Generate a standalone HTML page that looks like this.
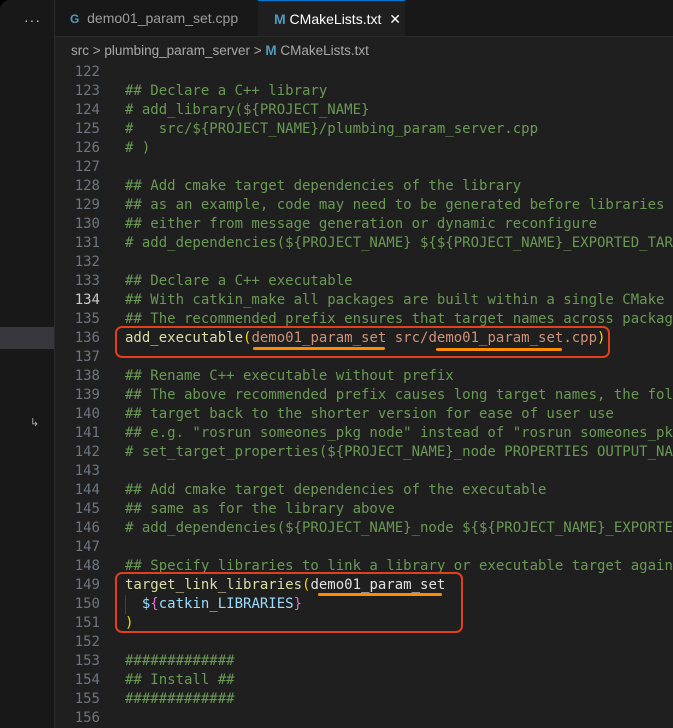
<!DOCTYPE html><html><head><style>
body{margin:0;width:673px;height:728px;background:#000;overflow:hidden;font-family:"Liberation Sans",sans-serif}
.win{position:absolute;left:0;top:0;width:673px;height:728px;background:#1f1f1f;border-top-left-radius:10px;overflow:hidden}
.side{position:absolute;left:0;top:0;width:54px;height:728px;background:#181818;border-right:1px solid #2b2b2b}
.hl{position:absolute;left:0;top:327px;width:54px;height:22px;background:#37373d}
.tabs{position:absolute;left:55px;top:0;right:0;height:36px;background:#181818;border-bottom:1px solid #2b2b2b}
.tab{position:absolute;top:0;height:36px;line-height:36px;font-size:14px;color:#9d9d9d}
.bc{position:absolute;left:55px;top:37px;right:0;height:25px;line-height:27px;font-size:13.5px;color:#a9a9a9}
.code{position:absolute;left:55px;top:63px;font-family:"DejaVu Sans Mono",monospace;font-size:14px;line-height:19px;white-space:pre}
.ln{position:absolute;left:0;width:45px;text-align:right;color:#6e7681}
.tx{position:absolute;left:70px;color:#cccccc}
.c{color:#6a9955}.f{color:#dcdcaa}.p{color:#ffd700}.s{color:#ce9178}.v{color:#9cdcfe}.m{color:#da70d6}
.box{position:absolute;border:2px solid #e0401b;border-radius:7px}
.ul{position:absolute;height:3px;background:#ff8c00;border-radius:2px}
</style></head><body><div class="win">
<div class="side"><div style="position:absolute;left:24px;top:12px;color:#ccc;font-size:14px;letter-spacing:1px">···</div><div class="hl"></div><div style="position:absolute;left:30px;top:416px;color:#aaa;font-size:11px">↳</div></div>
<div class="tabs">
<div class="tab" style="left:15px"><span style="color:#519aba;font-weight:bold;font-size:12px">G</span>&nbsp; demo01_param_set.cpp</div>
<div class="tab" style="left:203px;width:147px;background:#1f1f1f;border-top:1px solid #0078d4;height:36px;color:#fff;padding-left:16px;box-sizing:border-box"><span style="color:#519aba;font-weight:bold">M</span> CMakeLists.txt <span style="margin-left:4px">✕</span></div>
</div>
<div class="bc" style="padding-left:16px">src &gt; plumbing_param_server &gt; <span style="color:#519aba;font-weight:bold">M</span> CMakeLists.txt</div>
<div class="code">
<div class="ln" style="top:0">122</div><div class="ln" style="top:19px">123</div><div class="ln" style="top:38px">124</div><div class="ln" style="top:57px">125</div><div class="ln" style="top:76px">126</div><div class="ln" style="top:95px">127</div><div class="ln" style="top:114px">128</div><div class="ln" style="top:133px">129</div><div class="ln" style="top:152px">130</div><div class="ln" style="top:171px">131</div><div class="ln" style="top:190px">132</div><div class="ln" style="top:209px">133</div><div class="ln" style="top:228px;color:#ccc">134</div><div class="ln" style="top:247px">135</div><div class="ln" style="top:266px">136</div><div class="ln" style="top:285px">137</div><div class="ln" style="top:304px">138</div><div class="ln" style="top:323px">139</div><div class="ln" style="top:342px">140</div><div class="ln" style="top:361px">141</div><div class="ln" style="top:380px">142</div><div class="ln" style="top:399px">143</div><div class="ln" style="top:418px">144</div><div class="ln" style="top:437px">145</div><div class="ln" style="top:456px">146</div><div class="ln" style="top:475px">147</div><div class="ln" style="top:494px">148</div><div class="ln" style="top:513px">149</div><div class="ln" style="top:532px">150</div><div class="ln" style="top:551px">151</div><div class="ln" style="top:570px">152</div><div class="ln" style="top:589px">153</div><div class="ln" style="top:608px">154</div><div class="ln" style="top:627px">155</div><div class="ln" style="top:646px">156</div>
<div class="tx" style="top:0"><span class="c">
## Declare a C++ library
# add_library(${PROJECT_NAME}
#   src/${PROJECT_NAME}/plumbing_param_server.cpp
# )

## Add cmake target dependencies of the library
## as an example, code may need to be generated before libraries
## either from message generation or dynamic reconfigure
# add_dependencies(${PROJECT_NAME} ${${PROJECT_NAME}_EXPORTED_TARGETS}

## Declare a C++ executable
## With catkin_make all packages are built within a single CMake context
## The recommended prefix ensures that target names across packages
</span><span class="f">add_executable</span><span class="p">(</span><span class="s">demo01_param_set src/demo01_param_set.cpp</span><span class="p">)</span>

<span class="c">## Rename C++ executable without prefix
## The above recommended prefix causes long target names, the following
## target back to the shorter version for ease of user use
## e.g. "rosrun someones_pkg node" instead of "rosrun someones_pkg someo
# set_target_properties(${PROJECT_NAME}_node PROPERTIES OUTPUT_NAME node

## Add cmake target dependencies of the executable
## same as for the library above
# add_dependencies(${PROJECT_NAME}_node ${${PROJECT_NAME}_EXPORTED_TARGE

## Specify libraries to link a library or executable target against
</span><span class="f">target_link_libraries</span><span class="p">(</span><span style="color:#e0e0e0">demo01_param_set</span>
  <span class="v">$</span><span class="m">{</span><span class="v">catkin_LIBRARIES</span><span class="m">}</span>
<span class="p">)</span>

<span class="c">#############
## Install ##
#############</span>
</div></div>
<div style="position:absolute;left:125px;top:595px;width:1px;height:19px;background:#404040"></div>
<div class="box" style="left:115px;top:326px;width:491px;height:28px"></div>
<div class="box" style="left:115px;top:572px;width:344px;height:57px"></div>
<div class="ul" style="left:253px;top:347px;width:132px"></div>
<div class="ul" style="left:436px;top:348px;width:126px"></div>
<div class="ul" style="left:318px;top:593px;width:124px"></div>
</div></body></html>
